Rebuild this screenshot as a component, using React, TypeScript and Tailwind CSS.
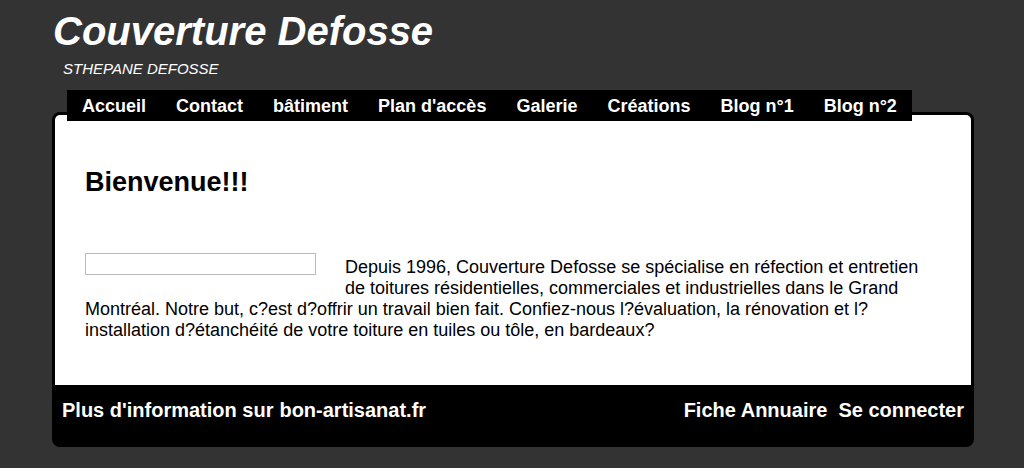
const navItems = ['Accueil', 'Contact', 'bâtiment', "Plan d'accès", 'Galerie', 'Créations', 'Blog n°1', 'Blog n°2'];

const App = () => {
	return (
		<div className="min-h-[468px] bg-[#333333] font-['Liberation_Sans',Arial,sans-serif] text-white">
			<div className="flex flex-col pl-[52px] pr-[50px] pt-[8px]">
				<h1 className="pl-[1px] text-[40px] font-bold italic leading-[46px]">Couverture Defosse</h1>
				<p className="mt-[6px] pl-[11px] text-[15px] italic leading-[17px]">STHEPANE DEFOSSE</p>
				<nav className="relative z-10 ml-[15px] mt-[13px] flex h-[31px] w-max items-center bg-black px-[15px] pt-[2px]">
					{navItems.map((item, i) => (
						<a
							key={item}
							href="#"
							className={`text-[18px] font-bold leading-[21px] text-white ${i > 0 ? 'ml-[30px]' : ''}`}
						>
							{item}
						</a>
					))}
				</nav>
				<div className="-mt-[9px] overflow-hidden rounded-[8px] border-[3px] border-black bg-black">
					<div className="h-[270px] bg-white px-[30px] pt-[52px] text-black">
						<h2 className="text-[27px] font-bold leading-[30px]">Bienvenue!!!</h2>
						<div className="mt-[56px] text-[18px] leading-[21px]">
							<div className="float-left mr-[29px] mb-[10px] h-[22px] w-[231px] border border-[#bbbbbb]" />
							<p className="pt-[4px]">
								Depuis 1996, Couverture Defosse se spécialise en réfection et entretien de toitures
								résidentielles, commerciales et industrielles dans le Grand Montréal. Notre but, c?est
								d?offrir un travail bien fait. Confiez-nous l?évaluation, la rénovation et l?installation
								d?étanchéité de votre toiture en tuiles ou tôle, en bardeaux?
							</p>
						</div>
					</div>
					<div className="flex h-[59px] items-center justify-between px-[7px] pb-[8px] text-[20px] font-bold leading-[23px]">
						<div className="flex gap-[6px]">
							<span>Plus d'information sur</span>
							<a href="#">bon-artisanat.fr</a>
						</div>
						<div className="flex gap-[11px]">
							<a href="#">Fiche Annuaire</a>
							<a href="#">Se connecter</a>
						</div>
					</div>
				</div>
			</div>
		</div>
	);
};

export default App;
